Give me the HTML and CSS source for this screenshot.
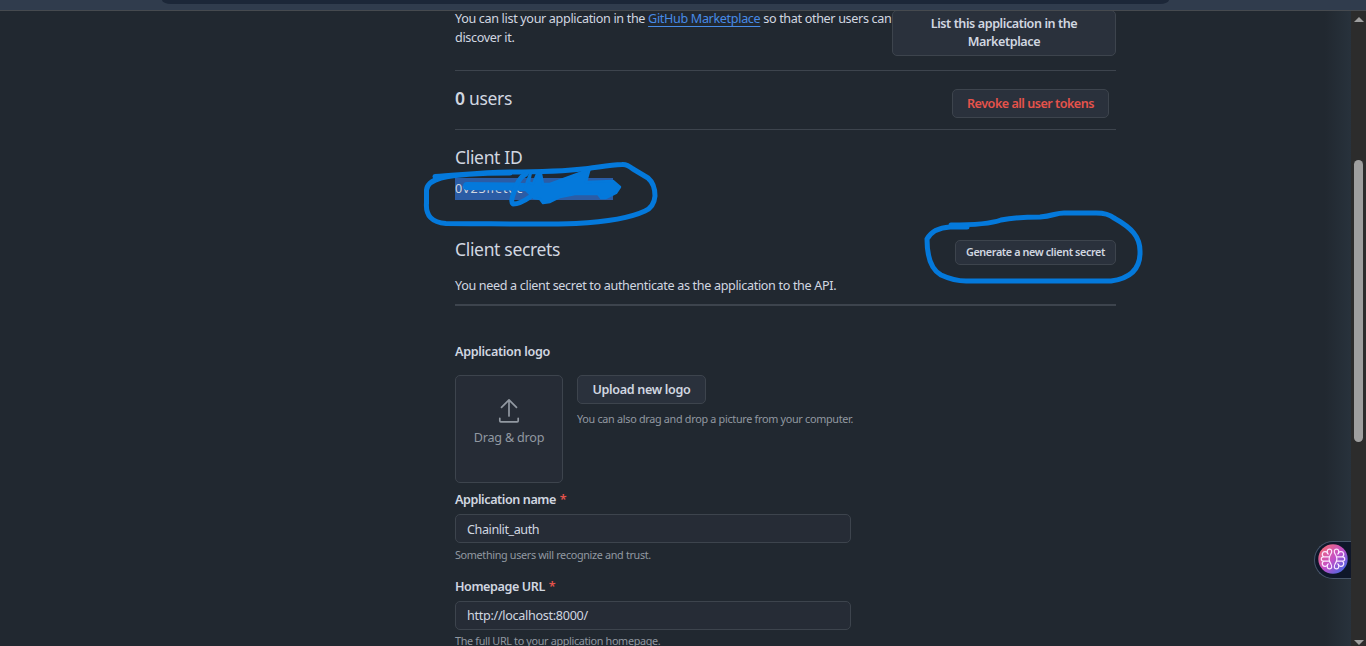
FILE: index.html
```html
<!DOCTYPE html>
<html lang="en">
<head>
<meta charset="utf-8">
<title>OAuth application settings</title>
<link rel="stylesheet" href="styles.css">
</head>
<body>
<div class="window">
  <header class="chrome"><div class="address"></div></header>
  <div class="viewport">
    <main class="page">
      <section class="marketplace">
        <p class="intro"><span class="intro-line">You can list your application in the <a class="link">GitHub Marketplace</a> so that other users can</span><br>discover it.</p>
        <button class="btn btn-list"><span>List this application in the</span><br><span>Marketplace</span></button>
      </section>
      <section class="users">
        <h2 class="heading"><b>0</b> users</h2>
        <button class="btn btn-revoke">Revoke all user tokens</button>
      </section>
      <section class="client-id">
        <h2 class="heading heading-id">Client ID</h2>
        <div><code class="id-value">0v23liet6c</code></div>
      </section>
      <section class="secrets">
        <div class="secrets-row">
          <h2 class="heading">Client secrets</h2>
          <button class="btn btn-secret">Generate a new client secret</button>
        </div>
        <p class="secrets-note">You need a client secret to authenticate as the application to the API.</p>
      </section>
      <section class="logo-section">
        <h3 class="label label-logo">Application logo</h3>
        <div class="logo-row">
          <div class="dropzone">
            <svg class="upload-icon" width="22" height="26" viewBox="0 0 22 26" fill="none" stroke="#9198a1" stroke-width="1.7" stroke-linecap="round" stroke-linejoin="round"><path d="M11 18V2M3.500 9.300 11 1.800l7.500 7.500M1.800 20.300v2.500q0 1 1 1h16.400q1 0 1-1v-2.500"/></svg>
            <span class="drop-text">Drag &amp; drop</span>
          </div>
          <div class="upload">
            <button class="btn btn-upload">Upload new logo</button>
            <p class="hint hint-upload">You can also drag and drop a picture from your computer.</p>
          </div>
        </div>
      </section>
      <section class="field">
        <h3 class="label label-name">Application name <i class="req">*</i></h3>
        <div class="input input-name">Chainlit_auth</div>
        <p class="hint hint-name">Something users will recognize and trust.</p>
      </section>
      <section class="field">
        <h3 class="label label-url">Homepage URL <i class="req">*</i></h3>
        <div class="input input-url">http://localhost:8000/</div>
        <p class="hint hint-home">The full URL to your application homepage.</p>
      </section>
    </main>
    <div class="scrollbar">
      <i class="arrow arrow-up"></i>
      <i class="thumb"></i>
      <i class="arrow arrow-down"></i>
    </div>
  </div>
  <svg class="ink" width="1366" height="646" viewBox="0 0 1366 646" fill="none" stroke="#0479db" stroke-width="5" stroke-linecap="round" stroke-linejoin="round">
    <path d="M435 176.500C460 175 480 172.500 510 172C545 172 570 170.500 588 168.500C600 167 610 165 622 164.500Q627 164 633 169L648 178Q655 184 655 196Q654 207 645 211C628 219 603 222 576 223.500C540 225 490 223.500 446 223.500Q425 222 426.500 203V190Q427 182 441 178C458 174 480 173 510 173"/>
    <path d="M467 186 515 186.500 540 188" stroke-width="8"/>
    <path d="M526 174Q518 178 514 192Q510 202 513 204Q520 204 530 197"/>
    <path d="M531 172Q526 183 525 189L534 198 540 199 543 203 550 202 560 197 575 194 598 194 601 198 606 198 616 193 620 187 613 181 586 182 590 168 580 173 550 184 543 184 541 174 537 174 533 184 529 182Z" fill="#0479db" stroke-width="2.500"/>
    <path d="M951 225C974 225 990 224 1001 220C1016 217 1030 217 1040 217C1053 216 1056 213 1064 213H1096Q1108 213 1114 218C1132 228 1140 237 1140 251Q1141 277 1111 281H966Q954 281 941 275C932 270 927 259 927 239Q933 228 950 227H967"/>
  </svg>
  <div class="assistant">
    <svg width="30" height="30" viewBox="-15 -15 30 30">
      <defs><linearGradient id="orb" x1="0" y1="0" x2="1" y2="1"><stop offset=".08" stop-color="#f36b72"/><stop offset=".5" stop-color="#c44fc7"/><stop offset=".95" stop-color="#366be8"/></linearGradient></defs>
      <circle r="14.700" fill="url(#orb)"/>
      <g fill="none" stroke="#fbe7ff" stroke-width="1.200" stroke-linejoin="round">
        <path id="petals" d="M-4-2.200H-9.500a2.200 2.200 0 0 0 0 4.400H-4M-2.500-4.500C-.5-7-1-9.800-3.500-9.800S-6.500-7-4.500-4.500M-5.300-4.800A2.700 2.700 0 1 0-9.200-2.300M-2.500 4.500C-.5 7-1 9.800-3.500 9.800S-6.500 7-4.500 4.500M-5.300 4.800A2.700 2.700 0 1 1-9.200 2.300M-1.800-5.500Q-6 0-1.800 5.500"/>
        <use href="#petals" transform="scale(-1 1)"/>
      </g>
    </svg>
  </div>
</div>
</body>
</html>
```
FILE: styles.css
```css
* { box-sizing: border-box; }
body { margin: 0; background: #212830; color: #d1d7e0; font: 12.6px/19px "Noto Sans", sans-serif; }
h2, h3, p { margin: 0; }
.window { position: relative; width: 1366px; height: 646px; overflow: hidden; display: flex; flex-direction: column; }
.chrome { flex: none; height: 11px; background: #303c4d; border-bottom: 1px solid #464a4f; }
.address { width: 1007px; height: 4px; margin-left: 162px; background: #1c2738; border-radius: 0 0 9px 9px / 0 0 4px 4px; }
.viewport { flex: 1; min-height: 0; overflow: hidden; display: flex; justify-content: space-between; background: linear-gradient(90deg, #212830 1325px, #28323c 1351px); }
.page { width: 661px; margin-left: 455px; white-space: nowrap; }

.btn { font: 600 12.6px/18px "Noto Sans", sans-serif; color: #d1d7e0; background: #2a313c; border: 1px solid #3d444d; border-radius: 5px; padding: 0; white-space: nowrap; text-align: center; }
.heading { font-size: 17.5px; line-height: 24px; font-weight: 400; letter-spacing: -.33px; }
.heading b { font-weight: 600; }
.label { font-size: 12.6px; line-height: 19px; font-weight: 600; letter-spacing: -.3px; }
.label-name, .label-url { letter-spacing: -.42px; }
.hint { font-size: 10.8px; line-height: 16px; color: #9198a1; letter-spacing: -.29px; }

.marketplace { display: flex; justify-content: space-between; height: 60px; border-bottom: 1px solid #3d444d; }
.intro { width: 437px; margin-top: -2px; letter-spacing: -.34px; }
.link { color: #478be6; text-decoration: underline; text-underline-offset: 3px; }
.btn-list { width: 224px; height: 46px; margin-top: -1px; letter-spacing: -.42px; }
.users { display: flex; justify-content: space-between; height: 59px; padding: 15px 7px 0 0; border-bottom: 1px solid #3d444d; }
.btn-revoke { width: 157px; height: 29px; margin-top: 3px; color: #e5534b; letter-spacing: -.5px; }
.client-id { height: 107px; padding-top: 15px; }
.id-value { display: block; width: 158px; height: 22px; margin-top: 9px; background: #2b5ca5; font: 12.6px/22px "Noto Sans", sans-serif; letter-spacing: .9px; overflow: hidden; }
.secrets { height: 69px; border-bottom: 2px solid #3d444d; }
.secrets-row { display: flex; justify-content: space-between; height: 39px; }
.btn-secret { width: 161px; height: 25px; margin-top: 3px; padding-bottom: 2px; font-size: 10.8px; letter-spacing: -.38px; }
.secrets-note { letter-spacing: -.34px; }
.logo-section { padding-top: 36px; }
.logo-row { display: flex; gap: 14px; margin-top: 14px; }
.dropzone { width: 108px; height: 108px; padding-top: 22px; display: flex; flex-direction: column; align-items: center; color: #9198a1; background: #262c36; border: 1px solid #3d444d; border-radius: 5px; }
.upload-icon { flex: none; }
.drop-text { margin-top: 4px; letter-spacing: -.2px; }
.btn-upload { display: block; width: 129px; height: 29px; letter-spacing: -.33px; }
.hint-upload { margin-top: 7px; }
.field { height: 87px; padding-top: 7px; }
.req { font-style: normal; color: #e5534b; margin-left: 1px; }
.input { width: 396px; height: 29px; margin-top: 5px; padding-left: 11px; line-height: 28px; background: #262c36; border: 1px solid #3d444d; border-radius: 5px; letter-spacing: -.3px; }
.input-name { letter-spacing: -.42px; line-height: 29px; }
.field .hint { margin-top: 4px; letter-spacing: -.33px; }
.field .hint-home { margin-top: 3px; }

.scrollbar { width: 15px; display: flex; flex-direction: column; align-items: center; background: #2c2c2c; }
.arrow { border: 5px solid transparent; width: 0; height: 0; }
.arrow-up { border-bottom: 5px solid #9f9f9f; border-top: 0; margin-top: 6px; }
.thumb { width: 9px; height: 282px; margin-top: 138px; border-radius: 5px; background: #9f9f9f; }
.arrow-down { border-top: 5px solid #9f9f9f; border-bottom: 0; margin: auto 0 1px; }

.ink { position: absolute; left: 0; top: 0; }
.assistant { position: absolute; left: 1314px; top: 541px; width: 37px; height: 38px; padding: 2px 0 0 3px; background: #0f172a; border: 1px solid #475569; border-right: 0; border-radius: 19px 0 0 19px; }
.assistant svg { display: block; }
```
